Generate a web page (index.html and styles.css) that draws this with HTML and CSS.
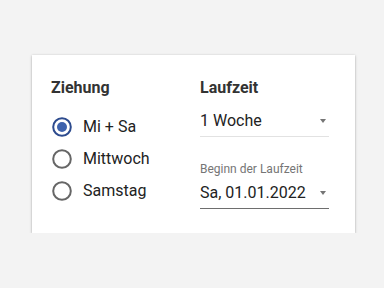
FILE: index.html
```html
<!DOCTYPE html>
<html lang="de">
<head>
<meta charset="utf-8">
<title>Ziehung und Laufzeit</title>
<link rel="stylesheet" href="styles.css">
</head>
<body>
<div class="card">
  <div class="col col-left">
    <div class="heading">Ziehung</div>
    <div class="radio-group">
      <div class="radio-row">
        <svg class="radio" viewBox="0 0 20 20" width="20" height="20"><circle cx="10" cy="10" r="8.8" fill="none" stroke="#2d4b8e" stroke-width="2"/><circle cx="10" cy="10" r="5" fill="#3e62ad"/></svg>
        <span class="radio-label">Mi + Sa</span>
      </div>
      <div class="radio-row">
        <svg class="radio" viewBox="0 0 20 20" width="20" height="20"><circle cx="10" cy="10" r="8.8" fill="none" stroke="#666666" stroke-width="2"/></svg>
        <span class="radio-label">Mittwoch</span>
      </div>
      <div class="radio-row">
        <svg class="radio" viewBox="0 0 20 20" width="20" height="20"><circle cx="10" cy="10" r="8.8" fill="none" stroke="#666666" stroke-width="2"/></svg>
        <span class="radio-label">Samstag</span>
      </div>
    </div>
  </div>
  <div class="col col-right">
    <div class="heading">Laufzeit</div>
    <div class="select select-light">
      <span class="select-value">1 Woche</span>
      <span class="arrow"></span>
    </div>
    <div class="field-label">Beginn der Laufzeit</div>
    <div class="select select-dark">
      <span class="select-value">Sa, 01.01.2022</span>
      <span class="arrow"></span>
    </div>
  </div>
</div>
</body>
</html>
```
FILE: styles.css
```css
html, body {
  margin: 0;
  padding: 0;
  background: #f3f3f3;
  font-family: Roboto, "Liberation Sans", sans-serif;
}
body {
  padding: 55px 0 0 32px;
}
.card {
  width: 323px;
  box-sizing: border-box;
  background: #ffffff;
  padding: 23px 26px 24px 19px;
  display: grid;
  grid-template-columns: 149px 129px;
  box-shadow: 0 1px 3px rgba(0,0,0,0.2), 0 1px 1px rgba(0,0,0,0.12), 0 0 2px rgba(0,0,0,0.08);
}
.heading {
  font-size: 16px;
  line-height: 20px;
  font-weight: 700;
  color: #333333;
}
.radio-group {
  margin-top: 13px;
  display: flex;
  flex-direction: column;
}
.radio-row {
  height: 32px;
  display: flex;
  align-items: center;
}
.radio {
  display: block;
  margin-left: 1px;
  flex: none;
}
.radio-label {
  margin-left: 11px;
  font-size: 16px;
  line-height: 20px;
  color: #222222;
}
.select {
  display: flex;
  align-items: center;
  justify-content: space-between;
  padding-bottom: 5px;
}
.col-right .heading + .select {
  margin-top: 13px;
}
.select-value {
  font-size: 16px;
  line-height: 20px;
  color: #222222;
}
.select-light {
  border-bottom: 1px solid #e2e2e2;
}
.select-dark {
  border-bottom: 1px solid #6e6e6e;
  margin-top: 6px;
}
.arrow {
  width: 0;
  height: 0;
  border-left: 3.5px solid transparent;
  border-right: 3.5px solid transparent;
  border-top: 4px solid #757575;
  margin-right: 3px;
}
.field-label {
  margin-top: 24px;
  font-size: 12px;
  line-height: 16px;
  color: #757575;
}
```
